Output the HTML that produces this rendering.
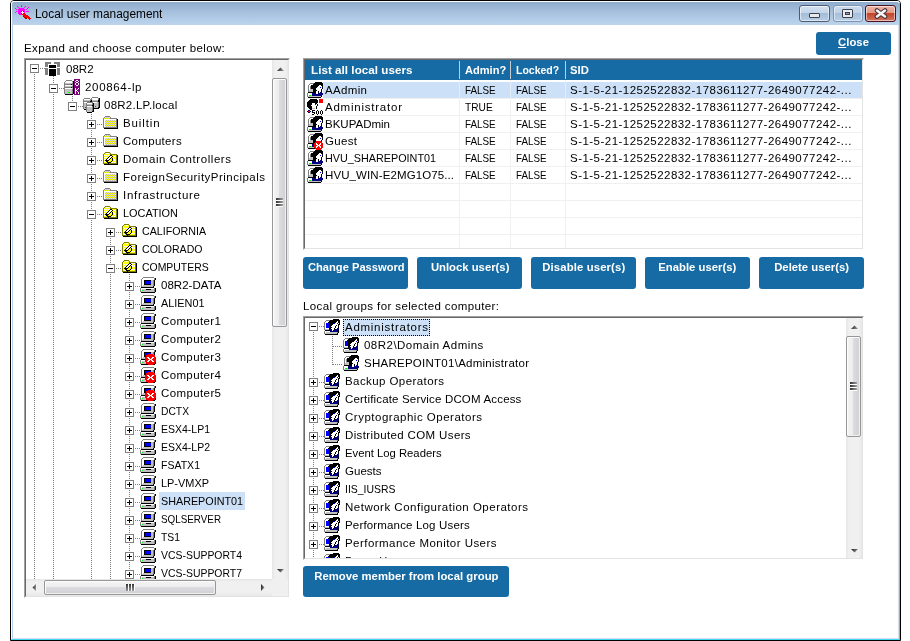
<!DOCTYPE html><html><head><meta charset="utf-8"><title>Local user management</title><style>
*{margin:0;padding:0;box-sizing:border-box}
html{background:#fff}
html,body{width:910px;height:641px;overflow:hidden}
body{position:relative;will-change:transform;font-family:"Liberation Sans",sans-serif;font-size:12px;color:#000}
div,svg{position:absolute}
svg.ic{overflow:visible}
svg.ic path{shape-rendering:crispEdges}
.t{white-space:nowrap;line-height:16px}
.vd{width:1px;background:repeating-linear-gradient(to bottom,#7c7c7c 0 1px,transparent 1px 2px)}
.hd{height:1px;background:repeating-linear-gradient(to right,#7c7c7c 0 1px,transparent 1px 2px)}
.eb{width:9px;height:9px;border:1px solid #808080;background:#fff}
.eb i{position:absolute;background:#000;display:block}
.eb .mh{left:1px;top:3px;width:5px;height:1px}
.eb .mv{left:3px;top:1px;width:1px;height:5px}
.btn{background:#176ba4;border-radius:3px}
.sb{background:#f0f0f0}
.thv{border:1px solid #979797;border-radius:2px;background:linear-gradient(to right,#f5f5f5,#ebebeb 50%,#dcdce0 50%,#d0d0d4);box-shadow:inset 1px 1px 0 #fdfdfd,inset -1px -1px 0 #f0f0f0}
.thh{border:1px solid #979797;border-radius:2px;background:linear-gradient(to bottom,#f5f5f5,#ebebeb 50%,#dcdce0 50%,#d0d0d4);box-shadow:inset 1px 1px 0 #fdfdfd,inset -1px -1px 0 #f0f0f0}
.grip{background:#777}
</style></head><body>
<svg width="0" height="0" style="position:absolute"><defs><linearGradient id="arrg" x1="0" y1="0" x2="1" y2="0.3"><stop offset="0" stop-color="#1a1a1a"/><stop offset="1" stop-color="#8a8a8a"/></linearGradient><symbol id="i-comp" viewBox="0 0 16 16"><path fill="#808080" d="M3 0h11v1h-11zM2 1h1v1h-1zM14 1h1v1h-1zM1 2h1v1h-1zM14 2h1v1h-1zM1 3h1v1h-1zM13 3h1v1h-1zM1 4h1v1h-1zM13 4h1v1h-1zM1 5h1v1h-1zM13 5h1v1h-1zM1 6h1v1h-1zM13 6h1v1h-1zM1 7h1v1h-1zM13 7h1v1h-1zM1 8h1v1h-1zM13 8h1v1h-1zM1 9h1v1h-1zM0 11h1v1h-1zM14 11h1v1h-1zM0 12h1v1h-1zM14 12h1v1h-1zM0 13h1v1h-1zM14 13h1v1h-1zM0 14h1v1h-1zM14 14h1v1h-1z"/><path fill="#ffffff" d="M3 1h11v1h-11zM2 2h12v1h-12zM2 3h2v1h-2zM2 4h2v1h-2zM2 5h2v1h-2zM2 6h2v1h-2zM2 7h2v1h-2zM2 8h1v1h-1zM1 11h13v1h-13zM1 12h1v1h-1zM1 13h1v1h-1z"/><path fill="#000000" d="M15 1h1v1h-1zM15 2h1v1h-1zM4 3h7v1h-7zM14 3h1v1h-1zM4 4h1v1h-1zM14 4h1v1h-1zM4 5h1v1h-1zM14 5h1v1h-1zM4 6h1v1h-1zM14 6h1v1h-1zM4 7h7v1h-7zM14 7h1v1h-1zM14 8h1v1h-1zM13 9h1v1h-1zM1 10h13v1h-13zM15 11h1v1h-1zM6 12h5v1h-5zM15 12h1v1h-1zM15 13h1v1h-1zM15 14h1v1h-1zM1 15h14v1h-14z"/><path fill="#c0c0c0" d="M11 3h2v1h-2zM11 4h2v1h-2zM11 5h2v1h-2zM11 6h2v1h-2zM11 7h2v1h-2zM3 8h10v1h-10zM2 9h11v1h-11zM2 12h4v1h-4zM11 12h3v1h-3zM3 13h11v1h-11zM1 14h13v1h-13z"/><path fill="#0000ff" d="M5 4h6v1h-6zM5 5h6v1h-6zM5 6h6v1h-6z"/><path fill="#00ff00" d="M2 13h1v1h-1z"/></symbol><symbol id="i-compx" viewBox="0 0 16 16"><path fill="#808080" d="M3 0h11v1h-11zM2 1h1v1h-1zM14 1h1v1h-1zM1 2h1v1h-1zM14 2h1v1h-1zM1 3h1v1h-1zM13 3h1v1h-1zM1 4h1v1h-1zM13 4h1v1h-1zM1 5h1v1h-1zM13 5h1v1h-1zM1 6h1v1h-1zM1 7h1v1h-1zM1 8h1v1h-1zM1 9h1v1h-1zM0 11h1v1h-1zM0 12h1v1h-1zM0 13h1v1h-1zM0 14h1v1h-1z"/><path fill="#ffffff" d="M3 1h11v1h-11zM2 2h12v1h-12zM2 3h2v1h-2zM2 4h2v1h-2zM2 5h2v1h-2zM2 6h2v1h-2zM2 7h2v1h-2zM2 8h1v1h-1zM7 8h2v1h-2zM12 8h2v1h-2zM8 9h2v1h-2zM11 9h2v1h-2zM9 10h3v1h-3zM1 11h4v1h-4zM8 11h2v1h-2zM11 11h2v1h-2zM1 12h1v1h-1zM7 12h2v1h-2zM12 12h2v1h-2zM1 13h1v1h-1z"/><path fill="#000000" d="M15 1h1v1h-1zM15 2h1v1h-1zM4 3h7v1h-7zM14 3h1v1h-1zM4 4h1v1h-1zM14 4h1v1h-1zM4 5h1v1h-1zM14 5h1v1h-1zM4 6h1v1h-1zM4 7h2v1h-2zM1 10h4v1h-4zM15 13h1v1h-1zM15 14h1v1h-1zM1 15h7v1h-7zM13 15h2v1h-2z"/><path fill="#c0c0c0" d="M11 3h2v1h-2zM11 4h2v1h-2zM3 8h2v1h-2zM2 9h3v1h-3zM2 12h3v1h-3zM3 13h3v1h-3zM1 14h5v1h-5z"/><path fill="#0000ff" d="M5 4h6v1h-6zM5 5h3v1h-3zM5 6h1v1h-1z"/><path fill="#ff0000" d="M8 5h5v1h-5zM6 6h9v1h-9zM6 7h9v1h-9zM5 8h2v1h-2zM9 8h3v1h-3zM14 8h2v1h-2zM5 9h3v1h-3zM10 9h1v1h-1zM13 9h3v1h-3zM5 10h4v1h-4zM12 10h4v1h-4zM5 11h3v1h-3zM10 11h1v1h-1zM13 11h3v1h-3zM5 12h2v1h-2zM9 12h3v1h-3zM14 12h2v1h-2zM6 13h9v1h-9zM6 14h9v1h-9zM8 15h5v1h-5z"/><path fill="#00ff00" d="M2 13h1v1h-1z"/></symbol><symbol id="i-folder" viewBox="0 0 16 16"><path fill="#808080" d="M3 1h5v1h-5zM2 2h1v1h-1zM8 2h1v1h-1zM1 3h1v1h-1zM8 3h7v1h-7zM1 4h1v1h-1zM14 4h1v1h-1zM1 5h1v1h-1zM14 5h1v1h-1zM1 6h1v1h-1zM14 6h1v1h-1zM1 7h1v1h-1zM14 7h1v1h-1zM1 8h1v1h-1zM14 8h1v1h-1zM1 9h1v1h-1zM14 9h1v1h-1zM1 10h1v1h-1zM14 10h1v1h-1zM1 11h1v1h-1zM14 11h1v1h-1zM1 12h14v1h-14z"/><path fill="#ffff00" d="M3 2h1v1h-1zM5 2h1v1h-1zM7 2h1v1h-1zM2 3h1v1h-1zM4 3h1v1h-1zM6 3h1v1h-1zM3 5h1v1h-1zM5 5h1v1h-1zM7 5h1v1h-1zM9 5h1v1h-1zM11 5h1v1h-1zM13 5h1v1h-1zM4 6h1v1h-1zM6 6h1v1h-1zM8 6h1v1h-1zM10 6h1v1h-1zM12 6h1v1h-1zM3 7h1v1h-1zM5 7h1v1h-1zM7 7h1v1h-1zM9 7h1v1h-1zM11 7h1v1h-1zM13 7h1v1h-1zM4 8h1v1h-1zM6 8h1v1h-1zM8 8h1v1h-1zM10 8h1v1h-1zM12 8h1v1h-1zM3 9h1v1h-1zM5 9h1v1h-1zM7 9h1v1h-1zM9 9h1v1h-1zM11 9h1v1h-1zM13 9h1v1h-1zM4 10h1v1h-1zM6 10h1v1h-1zM8 10h1v1h-1zM10 10h1v1h-1zM12 10h1v1h-1zM3 11h1v1h-1zM5 11h1v1h-1zM7 11h1v1h-1zM9 11h1v1h-1zM11 11h1v1h-1zM13 11h1v1h-1z"/><path fill="#c0c0c0" d="M4 2h1v1h-1zM6 2h1v1h-1zM3 3h1v1h-1zM5 3h1v1h-1zM7 3h1v1h-1zM4 5h1v1h-1zM6 5h1v1h-1zM8 5h1v1h-1zM10 5h1v1h-1zM12 5h1v1h-1zM3 6h1v1h-1zM5 6h1v1h-1zM7 6h1v1h-1zM9 6h1v1h-1zM11 6h1v1h-1zM13 6h1v1h-1zM4 7h1v1h-1zM6 7h1v1h-1zM8 7h1v1h-1zM10 7h1v1h-1zM12 7h1v1h-1zM3 8h1v1h-1zM5 8h1v1h-1zM7 8h1v1h-1zM9 8h1v1h-1zM11 8h1v1h-1zM13 8h1v1h-1zM4 9h1v1h-1zM6 9h1v1h-1zM8 9h1v1h-1zM10 9h1v1h-1zM12 9h1v1h-1zM3 10h1v1h-1zM5 10h1v1h-1zM7 10h1v1h-1zM9 10h1v1h-1zM11 10h1v1h-1zM13 10h1v1h-1zM4 11h1v1h-1zM6 11h1v1h-1zM8 11h1v1h-1zM10 11h1v1h-1zM12 11h1v1h-1z"/><path fill="#ffffff" d="M2 4h12v1h-12zM2 5h1v1h-1zM2 6h1v1h-1zM2 7h1v1h-1zM2 8h1v1h-1zM2 9h1v1h-1zM2 10h1v1h-1zM2 11h1v1h-1z"/><path fill="#000000" d="M15 4h1v1h-1zM15 5h1v1h-1zM15 6h1v1h-1zM15 7h1v1h-1zM15 8h1v1h-1zM15 9h1v1h-1zM15 10h1v1h-1zM15 11h1v1h-1zM15 12h1v1h-1zM2 13h14v1h-14z"/></symbol><symbol id="i-ou" viewBox="0 0 16 16"><path fill="#808000" d="M3 1h5v1h-5zM2 2h1v1h-1zM8 2h1v1h-1zM1 3h1v1h-1zM8 3h7v1h-7zM1 4h1v1h-1zM14 4h1v1h-1zM1 5h1v1h-1zM14 5h1v1h-1zM1 6h1v1h-1zM14 6h1v1h-1zM1 7h1v1h-1zM14 7h1v1h-1zM1 8h1v1h-1zM14 8h1v1h-1zM1 9h1v1h-1zM14 9h1v1h-1zM1 10h1v1h-1zM14 10h1v1h-1zM1 11h1v1h-1zM14 11h1v1h-1zM1 12h5v1h-5zM7 12h8v1h-8z"/><path fill="#ffff00" d="M3 2h1v1h-1zM7 2h1v1h-1zM2 3h6v1h-6zM3 4h1v1h-1zM5 4h1v1h-1zM7 4h1v1h-1zM10 4h1v1h-1zM12 4h1v1h-1zM2 5h1v1h-1zM4 5h1v1h-1zM6 5h1v1h-1zM11 5h1v1h-1zM13 5h1v1h-1zM3 6h1v1h-1zM5 6h1v1h-1zM10 6h1v1h-1zM12 6h1v1h-1zM2 7h1v1h-1zM4 7h1v1h-1zM9 7h1v1h-1zM12 7h1v1h-1zM3 8h1v1h-1zM8 8h2v1h-2zM11 8h1v1h-1zM13 8h1v1h-1zM2 9h1v1h-1zM7 9h3v1h-3zM11 9h1v1h-1zM13 9h1v1h-1zM3 10h1v1h-1zM6 10h3v1h-3zM10 10h1v1h-1zM12 10h1v1h-1zM2 11h1v1h-1zM4 11h1v1h-1zM9 11h1v1h-1zM11 11h1v1h-1zM13 11h1v1h-1z"/><path fill="#ffffff" d="M4 2h3v1h-3zM2 4h1v1h-1zM4 4h1v1h-1zM6 4h1v1h-1zM11 4h1v1h-1zM13 4h1v1h-1zM3 5h1v1h-1zM5 5h1v1h-1zM8 5h2v1h-2zM12 5h1v1h-1zM2 6h1v1h-1zM4 6h1v1h-1zM7 6h2v1h-2zM11 6h1v1h-1zM13 6h1v1h-1zM3 7h1v1h-1zM6 7h2v1h-2zM11 7h1v1h-1zM13 7h1v1h-1zM2 8h1v1h-1zM5 8h2v1h-2zM12 8h1v1h-1zM12 9h1v1h-1zM2 10h1v1h-1zM11 10h1v1h-1zM13 10h1v1h-1zM3 11h1v1h-1zM10 11h1v1h-1zM12 11h1v1h-1z"/><path fill="#000000" d="M8 4h2v1h-2zM15 4h1v1h-1zM7 5h1v1h-1zM10 5h1v1h-1zM15 5h1v1h-1zM6 6h1v1h-1zM9 6h1v1h-1zM15 6h1v1h-1zM5 7h1v1h-1zM8 7h1v1h-1zM10 7h1v1h-1zM15 7h1v1h-1zM4 8h1v1h-1zM7 8h1v1h-1zM10 8h1v1h-1zM15 8h1v1h-1zM3 9h4v1h-4zM10 9h1v1h-1zM15 9h1v1h-1zM4 10h2v1h-2zM9 10h1v1h-1zM15 10h1v1h-1zM5 11h4v1h-4zM15 11h1v1h-1zM6 12h1v1h-1zM15 12h1v1h-1zM2 13h14v1h-14z"/></symbol><symbol id="i-user" viewBox="0 0 16 16"><path fill="#000000" d="M8 0h7v1h-7zM7 1h9v1h-9zM6 2h10v1h-10zM4 3h8v1h-8zM14 3h2v1h-2zM4 4h7v1h-7zM15 4h1v1h-1zM4 5h6v1h-6zM15 5h1v1h-1zM4 6h5v1h-5zM15 6h1v1h-1zM6 7h3v1h-3zM14 7h1v1h-1zM6 8h4v1h-4zM14 8h1v1h-1zM6 9h3v1h-3zM11 9h1v1h-1zM14 9h1v1h-1zM1 10h8v1h-8zM11 10h1v1h-1zM14 14h1v1h-1zM1 15h13v1h-13z"/><path fill="#808080" d="M3 1h4v1h-4zM2 2h1v1h-1zM1 3h1v1h-1zM1 4h1v1h-1zM3 4h1v1h-1zM1 5h1v1h-1zM3 5h1v1h-1zM1 6h1v1h-1zM3 6h1v1h-1zM1 7h1v1h-1zM1 8h1v1h-1zM1 9h1v1h-1zM0 11h1v1h-1zM0 12h1v1h-1zM0 13h1v1h-1zM0 14h1v1h-1z"/><path fill="#ffffff" d="M3 2h3v1h-3zM2 3h2v1h-2zM12 3h2v1h-2zM2 4h1v1h-1zM11 4h4v1h-4zM2 5h1v1h-1zM10 5h3v1h-3zM14 5h1v1h-1zM2 6h1v1h-1zM9 6h6v1h-6zM2 7h1v1h-1zM9 7h5v1h-5zM10 8h4v1h-4zM9 9h2v1h-2zM12 9h2v1h-2zM9 10h2v1h-2zM12 10h1v1h-1zM1 11h4v1h-4zM9 11h2v1h-2zM1 12h4v1h-4zM1 13h1v1h-1z"/><path fill="#0000ff" d="M13 5h1v1h-1z"/><path fill="#c0c0c0" d="M3 7h3v1h-3zM2 8h4v1h-4zM2 9h4v1h-4zM4 13h1v1h-1zM1 14h13v1h-13z"/><path fill="#000080" d="M13 10h2v1h-2zM5 11h4v1h-4zM11 11h5v1h-5zM5 12h11v1h-11zM5 13h10v1h-10z"/><path fill="#00ff00" d="M2 13h2v1h-2z"/></symbol><symbol id="i-userx" viewBox="0 0 16 17"><path fill="#000000" d="M8 0h7v1h-7zM7 1h9v1h-9zM6 2h10v1h-10zM4 3h8v1h-8zM14 3h2v1h-2zM4 4h7v1h-7zM15 4h1v1h-1zM4 5h6v1h-6zM15 5h1v1h-1zM4 6h5v1h-5zM15 6h1v1h-1zM6 7h3v1h-3zM14 7h1v1h-1zM6 8h3v1h-3zM14 8h1v1h-1zM6 9h2v1h-2zM1 10h6v1h-6zM1 15h7v1h-7z"/><path fill="#808080" d="M3 1h4v1h-4zM2 2h1v1h-1zM1 3h1v1h-1zM1 4h1v1h-1zM3 4h1v1h-1zM1 5h1v1h-1zM3 5h1v1h-1zM1 6h1v1h-1zM3 6h1v1h-1zM1 7h1v1h-1zM1 8h1v1h-1zM1 9h1v1h-1zM0 11h1v1h-1zM0 12h1v1h-1zM0 13h1v1h-1zM0 14h1v1h-1z"/><path fill="#ffffff" d="M3 2h3v1h-3zM2 3h2v1h-2zM12 3h2v1h-2zM2 4h1v1h-1zM11 4h4v1h-4zM2 5h1v1h-1zM10 5h3v1h-3zM14 5h1v1h-1zM2 6h1v1h-1zM9 6h6v1h-6zM2 7h1v1h-1zM9 7h5v1h-5zM9 10h1v1h-1zM13 10h1v1h-1zM1 11h4v1h-4zM9 11h2v1h-2zM12 11h2v1h-2zM1 12h4v1h-4zM10 12h3v1h-3zM1 13h1v1h-1zM9 13h2v1h-2zM12 13h2v1h-2zM9 14h1v1h-1zM13 14h1v1h-1z"/><path fill="#0000ff" d="M13 5h1v1h-1z"/><path fill="#c0c0c0" d="M3 7h3v1h-3zM2 8h4v1h-4zM2 9h4v1h-4zM4 13h1v1h-1zM1 14h6v1h-6z"/><path fill="#ff0000" d="M9 8h5v1h-5zM8 9h7v1h-7zM7 10h2v1h-2zM10 10h3v1h-3zM14 10h2v1h-2zM7 11h2v1h-2zM11 11h1v1h-1zM14 11h2v1h-2zM7 12h3v1h-3zM13 12h3v1h-3zM7 13h2v1h-2zM11 13h1v1h-1zM14 13h2v1h-2zM7 14h2v1h-2zM10 14h3v1h-3zM14 14h2v1h-2zM8 15h7v1h-7zM9 16h5v1h-5z"/><path fill="#000080" d="M5 11h2v1h-2zM5 12h2v1h-2zM5 13h2v1h-2z"/><path fill="#00ff00" d="M2 13h2v1h-2z"/></symbol><symbol id="i-admin" viewBox="0 0 18 17"><path fill="#000000" d="M4 1h7v1h-7zM3 2h9v1h-9zM2 3h10v1h-10zM1 4h11v1h-11zM1 5h5v1h-5zM9 5h2v1h-2zM1 6h5v1h-5zM11 6h1v1h-1zM1 7h4v1h-4zM11 7h1v1h-1zM1 8h5v1h-5zM10 8h1v1h-1zM2 9h4v1h-4zM10 9h1v1h-1zM3 10h3v1h-3zM10 10h1v1h-1zM4 11h2v1h-2zM6 12h3v1h-3zM11 12h1v1h-1zM15 12h1v1h-1zM6 13h1v1h-1zM10 13h1v1h-1zM12 13h1v1h-1zM14 13h1v1h-1zM16 13h1v1h-1zM6 14h3v1h-3zM10 14h1v1h-1zM12 14h1v1h-1zM14 14h1v1h-1zM16 14h1v1h-1zM8 15h1v1h-1zM10 15h1v1h-1zM12 15h1v1h-1zM14 15h1v1h-1zM16 15h1v1h-1zM6 16h2v1h-2zM11 16h1v1h-1zM15 16h1v1h-1z"/><path fill="#ff0000" d="M13 1h4v1h-4zM13 2h4v1h-4zM13 3h4v1h-4zM13 4h4v1h-4zM2 13h2v1h-2z"/><path fill="#ffffff" d="M6 5h3v1h-3zM6 6h3v1h-3zM10 6h1v1h-1zM5 7h6v1h-6zM6 8h4v1h-4zM6 9h4v1h-4zM9 10h1v1h-1z"/><path fill="#0000ff" d="M9 6h1v1h-1z"/><path fill="#c0c0c0" d="M6 10h3v1h-3z"/><path fill="#000080" d="M2 12h2v1h-2zM1 13h1v1h-1zM4 13h1v1h-1zM2 14h2v1h-2z"/></symbol><symbol id="i-group" viewBox="0 0 16 16"><path fill="#000000" d="M9 0h6v1h-6zM6 1h10v1h-10zM5 2h8v1h-8zM14 2h2v1h-2zM4 3h8v1h-8zM14 3h2v1h-2zM5 4h5v1h-5zM15 4h1v1h-1zM5 5h4v1h-4zM14 5h2v1h-2zM5 6h3v1h-3zM12 6h1v1h-1zM14 6h1v1h-1zM5 7h2v1h-2zM11 7h1v1h-1zM14 7h1v1h-1zM5 8h3v1h-3zM11 8h1v1h-1zM14 8h1v1h-1zM5 9h2v1h-2zM10 9h1v1h-1zM5 10h1v1h-1zM10 10h1v1h-1zM1 11h5v1h-5zM14 11h1v1h-1zM14 12h1v1h-1zM14 13h1v1h-1zM13 14h1v1h-1zM1 15h13v1h-13z"/><path fill="#808080" d="M2 1h4v1h-4zM1 2h1v1h-1zM0 3h1v1h-1zM0 4h1v1h-1zM0 5h1v1h-1zM0 6h1v1h-1zM0 7h1v1h-1zM0 8h1v1h-1zM0 9h1v1h-1zM0 10h1v1h-1zM0 12h1v1h-1zM0 13h1v1h-1zM13 13h1v1h-1zM0 14h1v1h-1z"/><path fill="#ffffff" d="M2 2h3v1h-3zM13 2h1v1h-1zM1 3h3v1h-3zM12 3h2v1h-2zM1 4h1v1h-1zM11 4h2v1h-2zM14 4h1v1h-1zM1 5h1v1h-1zM9 5h5v1h-5zM1 6h1v1h-1zM8 6h4v1h-4zM13 6h1v1h-1zM1 7h1v1h-1zM7 7h4v1h-4zM12 7h2v1h-2zM1 8h1v1h-1zM8 8h3v1h-3zM12 8h2v1h-2zM1 9h4v1h-4zM7 9h3v1h-3zM11 9h2v1h-2zM8 10h2v1h-2zM8 11h1v1h-1zM1 12h5v1h-5zM1 13h1v1h-1z"/><path fill="#0000ff" d="M2 4h3v1h-3zM10 4h1v1h-1zM13 4h1v1h-1zM2 5h3v1h-3zM2 6h3v1h-3zM2 7h3v1h-3zM2 8h3v1h-3z"/><path fill="#000080" d="M13 9h2v1h-2zM6 10h2v1h-2zM11 10h4v1h-4zM6 11h2v1h-2zM9 11h5v1h-5zM6 12h8v1h-8z"/><path fill="#c0c0c0" d="M1 10h4v1h-4zM2 13h11v1h-11zM1 14h12v1h-12z"/></symbol><symbol id="i-root" viewBox="0 0 15 14"><path fill="#808080" d="M0 0h6v1h-6zM9 0h6v1h-6zM0 1h6v1h-6zM9 1h6v1h-6zM0 2h3v1h-3zM12 2h3v1h-3zM0 3h3v1h-3zM12 3h3v1h-3zM0 4h3v1h-3zM12 4h3v1h-3zM0 6h3v1h-3zM12 6h3v1h-3zM0 7h3v1h-3zM12 7h3v1h-3zM0 8h3v1h-3zM12 8h3v1h-3zM0 9h3v1h-3zM12 9h3v1h-3zM0 10h3v1h-3zM12 10h3v1h-3zM0 11h3v1h-3zM12 11h3v1h-3zM0 12h3v1h-3zM12 12h3v1h-3z"/><path fill="#000000" d="M4 3h7v1h-7zM4 4h7v1h-7zM4 5h7v1h-7zM4 7h7v1h-7zM4 8h7v1h-7zM4 9h7v1h-7zM4 10h7v1h-7zM4 11h7v1h-7zM4 12h7v1h-7zM4 13h7v1h-7z"/></symbol><symbol id="i-server" viewBox="0 0 18 17"><path fill="#800080" d="M11 1h6v1h-6zM11 2h2v1h-2zM15 2h2v1h-2zM11 3h1v1h-1zM13 3h2v1h-2zM16 3h1v1h-1zM11 4h2v1h-2zM15 4h2v1h-2zM11 5h1v1h-1zM13 5h2v1h-2zM16 5h1v1h-1zM11 6h1v1h-1zM13 6h2v1h-2zM16 6h1v1h-1zM11 7h2v1h-2zM15 7h2v1h-2zM11 8h6v1h-6zM11 9h6v1h-6zM11 10h1v1h-1zM13 10h2v1h-2zM16 10h1v1h-1zM11 11h1v1h-1zM13 11h1v1h-1zM15 11h2v1h-2zM11 12h1v1h-1zM14 12h3v1h-3zM11 13h1v1h-1zM13 13h1v1h-1zM15 13h2v1h-2zM11 14h1v1h-1zM13 14h2v1h-2zM16 14h1v1h-1zM11 15h1v1h-1zM13 15h2v1h-2zM16 15h1v1h-1zM11 16h6v1h-6z"/><path fill="#808080" d="M3 2h6v1h-6zM2 3h1v1h-1zM9 3h1v1h-1zM1 4h1v1h-1zM1 5h1v1h-1zM9 5h1v1h-1zM1 6h7v1h-7zM9 6h1v1h-1zM1 7h1v1h-1zM1 8h1v1h-1zM9 8h1v1h-1zM1 9h7v1h-7zM9 9h1v1h-1zM1 10h1v1h-1zM1 11h1v1h-1zM9 11h1v1h-1zM1 12h1v1h-1zM9 12h1v1h-1zM1 13h1v1h-1zM9 13h1v1h-1zM1 14h1v1h-1zM9 14h1v1h-1zM1 15h1v1h-1zM9 15h1v1h-1z"/><path fill="#ffffff" d="M13 2h2v1h-2zM3 3h6v1h-6zM12 3h1v1h-1zM15 3h1v1h-1zM2 4h7v1h-7zM13 4h2v1h-2zM12 5h1v1h-1zM15 5h1v1h-1zM12 6h1v1h-1zM15 6h1v1h-1zM2 7h7v1h-7zM13 7h2v1h-2zM2 10h7v1h-7zM12 10h1v1h-1zM15 10h1v1h-1zM12 11h1v1h-1zM14 11h1v1h-1zM12 12h2v1h-2zM12 13h1v1h-1zM14 13h1v1h-1zM12 14h1v1h-1zM15 14h1v1h-1zM12 15h1v1h-1zM15 15h1v1h-1z"/><path fill="#000000" d="M10 3h1v1h-1zM10 4h1v1h-1zM10 5h1v1h-1zM8 6h1v1h-1zM10 6h1v1h-1zM10 7h1v1h-1zM10 8h1v1h-1zM8 9h1v1h-1zM10 9h1v1h-1zM10 10h1v1h-1zM10 11h1v1h-1zM10 12h1v1h-1zM10 13h1v1h-1zM10 14h1v1h-1zM10 15h1v1h-1zM2 16h8v1h-8z"/><path fill="#c0c0c0" d="M9 4h1v1h-1zM2 5h7v1h-7zM9 7h1v1h-1zM2 8h7v1h-7zM9 10h1v1h-1zM2 11h7v1h-7zM2 12h7v1h-7zM2 13h7v1h-7zM2 14h3v1h-3zM7 14h2v1h-2zM2 15h7v1h-7z"/><path fill="#00ff00" d="M5 14h2v1h-2z"/></symbol><symbol id="i-domain" viewBox="0 0 18 17"><path fill="#808080" d="M10 1h6v1h-6zM2 2h6v1h-6zM9 2h1v1h-1zM16 2h1v1h-1zM1 3h1v1h-1zM8 3h2v1h-2zM16 3h1v1h-1zM1 4h1v1h-1zM8 4h1v1h-1zM1 5h7v1h-7zM10 5h6v1h-6zM1 6h1v1h-1zM5 6h6v1h-6zM16 6h1v1h-1zM1 7h1v1h-1zM4 7h1v1h-1zM10 7h1v1h-1zM16 7h1v1h-1zM1 8h1v1h-1zM4 8h1v1h-1zM10 8h1v1h-1zM16 8h1v1h-1zM1 9h1v1h-1zM4 9h6v1h-6zM16 9h1v1h-1zM1 10h1v1h-1zM4 10h1v1h-1zM10 10h1v1h-1zM16 10h1v1h-1zM1 11h1v1h-1zM4 11h1v1h-1zM10 11h1v1h-1zM1 12h1v1h-1zM4 12h1v1h-1zM10 12h1v1h-1zM4 13h1v1h-1zM10 13h1v1h-1zM4 14h1v1h-1zM10 14h1v1h-1zM4 15h1v1h-1z"/><path fill="#ffffff" d="M10 2h6v1h-6zM2 3h6v1h-6zM10 3h6v1h-6zM2 6h3v1h-3zM11 6h4v1h-4zM5 7h5v1h-5zM5 10h5v1h-5z"/><path fill="#000000" d="M17 2h1v1h-1zM17 3h1v1h-1zM9 4h1v1h-1zM16 4h2v1h-2zM8 5h2v1h-2zM16 5h2v1h-2zM17 6h1v1h-1zM11 7h1v1h-1zM17 7h1v1h-1zM11 8h1v1h-1zM17 8h1v1h-1zM10 9h2v1h-2zM17 9h1v1h-1zM11 10h1v1h-1zM17 10h1v1h-1zM11 11h1v1h-1zM16 11h2v1h-2zM11 12h6v1h-6zM2 13h2v1h-2zM11 13h1v1h-1zM11 14h1v1h-1zM10 15h2v1h-2zM5 16h5v1h-5z"/><path fill="#c0c0c0" d="M2 4h6v1h-6zM10 4h6v1h-6zM15 6h1v1h-1zM2 7h2v1h-2zM12 7h4v1h-4zM2 8h2v1h-2zM5 8h5v1h-5zM12 8h4v1h-4zM2 9h2v1h-2zM12 9h4v1h-4zM2 10h2v1h-2zM12 10h1v1h-1zM14 10h2v1h-2zM2 11h1v1h-1zM5 11h5v1h-5zM12 11h4v1h-4zM2 12h2v1h-2zM5 12h5v1h-5zM5 13h5v1h-5zM5 14h5v1h-5zM5 15h5v1h-5z"/><path fill="#ff0000" d="M13 10h1v1h-1zM3 11h1v1h-1z"/></symbol></defs></svg>
<div style="left:10px;top:0;width:891px;height:641px;border:1px solid #000;border-radius:4px 4px 0 0"></div>
<div style="left:11px;top:1px;width:889px;height:639px;border-left:1px solid #fff;border-top:1px solid #fff;border-radius:3px 3px 0 0"></div>
<div style="left:12px;top:2px;width:887px;height:23px;background:linear-gradient(to bottom,#8fabcc,#a9c3df 50%,#bcd4ee);border-radius:2px 2px 0 0"></div>
<div style="left:12px;top:25px;width:1px;height:613px;background:#b8d0ec"></div>
<div style="left:898px;top:25px;width:1px;height:614px;background:#d8dcef"></div>
<div style="left:899px;top:3px;width:1px;height:637px;background:#40d0f0"></div>
<div style="left:12px;top:638px;width:887px;height:1px;background:#d8dcef"></div>
<div style="left:11px;top:639px;width:889px;height:1px;background:#40d8f0"></div>
<div class="t" style="left:35px;top:6px;transform:scaleX(0.9896);transform-origin:0 0;color:#000">Local user management</div>
<svg class="ic" style="left:14px;top:4px;width:18px;height:17px" viewBox="0 0 18 17"><path fill="#ff00ff" d="M7 1h1v1h-1zM3 2h1v1h-1zM7 2h1v1h-1zM11 2h1v1h-1zM4 3h1v1h-1zM10 3h1v1h-1zM14 3h1v1h-1zM1 4h1v1h-1zM5 4h5v1h-5zM13 4h1v1h-1zM2 5h1v1h-1zM4 5h7v1h-7zM12 5h1v1h-1zM4 6h7v1h-7zM2 7h1v1h-1zM4 7h3v1h-3zM10 7h1v1h-1zM12 7h3v1h-3zM1 8h1v1h-1zM4 8h3v1h-3zM10 8h1v1h-1zM4 9h3v1h-3zM5 10h3v1h-3z"/><path fill="#800080" d="M7 7h1v1h-1zM9 7h1v1h-1zM7 9h1v1h-1z"/><path fill="#ffffff" d="M8 7h1v1h-1zM7 8h3v1h-3zM8 9h1v1h-1z"/><path fill="#ff0000" d="M9 9h2v1h-2zM8 10h4v1h-4zM9 11h5v1h-5zM10 12h5v1h-5zM12 13h4v1h-4zM14 14h3v1h-3zM15 15h1v1h-1z"/><path fill="#a00000" d="M9 12h1v1h-1zM10 13h2v1h-2zM11 14h2v1h-2z"/></svg>
<div style="left:799px;top:5px;width:31px;height:17px;border:1px solid #4d5c74;border-radius:3px;background:linear-gradient(to bottom,#d3e0ef,#c2d4e8 50%,#a3bcd8 50%,#b7cde6);box-shadow:inset 0 0 0 1px rgba(255,255,255,0.55)"></div>
<div style="left:809px;top:13px;width:11px;height:5px;border:1px solid #3a4252;border-radius:1px;background:#e9e9e9"></div>
<div style="left:833px;top:5px;width:30px;height:17px;border:1px solid #7d95b2;border-radius:3px;background:linear-gradient(to bottom,#ccdbec,#bfd1e6 50%,#a7bfda 50%,#b8cee6);box-shadow:inset 0 0 0 1px rgba(255,255,255,0.55)"></div>
<div style="left:842px;top:9px;width:11px;height:9px;border:1px solid #3a4252;border-radius:1px;background:#ececec"></div>
<div style="left:845px;top:12px;width:5px;height:3px;border:1px solid #3a4252;background:#8aa4c4"></div>
<div style="left:865px;top:5px;width:31px;height:17px;border:1px solid #4a1222;border-radius:3px;background:linear-gradient(to bottom,#eeb3a5,#e39784 50%,#c4452a 50%,#d2745c);box-shadow:inset 0 0 0 1px rgba(255,255,255,0.55)"></div>
<svg style="left:874px;top:8px;width:14px;height:11px" viewBox="0 0 14 11"><path d="M3 2.5L11 8.5M11 2.5L3 8.5" stroke="#40303c" stroke-width="4.6" stroke-linecap="round"/><path d="M3 2.5L11 8.5M11 2.5L3 8.5" stroke="#f6f6f6" stroke-width="2.6" stroke-linecap="round"/></svg>
<div class="t" style="left:24px;top:40px;letter-spacing:0.361px;font-size:11.5px">Expand and choose computer below:</div>
<div class="t" style="left:303px;top:298px;letter-spacing:0.388px;font-size:11.5px">Local groups for selected computer:</div>
<div class="btn" style="left:816px;top:32px;width:75px;height:23px"></div>
<div class="t" style="left:838px;top:34px;letter-spacing:0.034px;font-size:11.3px;font-weight:bold;color:#fff;text-decoration-thickness:1px;text-underline-offset:1px"><u>C</u>lose</div>
<div style="left:24px;top:58px;width:266px;height:540px;border-top:1px solid #a0a0a0;border-left:1px solid #a0a0a0;border-right:1px solid #fff;border-bottom:1px solid #fff"></div>
<div style="left:25px;top:59px;width:264px;height:538px;border-top:1px solid #696969;border-left:1px solid #696969;border-right:1px solid #e3e3e3;border-bottom:1px solid #e3e3e3;overflow:hidden">
<div class="vd" style="left:8px;top:14px;height:526px"></div>
<div class="vd" style="left:27px;top:16px;height:524px"></div>
<div class="vd" style="left:46px;top:34px;height:8px"></div>
<div class="vd" style="left:65px;top:52px;height:488px"></div>
<div class="vd" style="left:84px;top:178px;height:362px"></div>
<div class="vd" style="left:103px;top:214px;height:326px"></div>
<div class="hd" style="left:14px;top:8px;width:5px"></div>
<div class="eb" style="left:4px;top:4px"><i class="mh"></i></div>
<svg class="ic" style="left:19px;top:2px;width:15px;height:14px"><use href="#i-root"/></svg>
<div class="t" style="left:40px;top:1px;letter-spacing:0.036px;font-size:11.5px">08R2</div>
<div class="hd" style="left:33px;top:28px;width:5px"></div>
<div class="eb" style="left:23px;top:24px"><i class="mh"></i></div>
<svg class="ic" style="left:37px;top:18px;width:18px;height:17px"><use href="#i-server"/></svg>
<div class="t" style="left:59px;top:19px;letter-spacing:0.668px;font-size:11.5px">200864-lp</div>
<div class="hd" style="left:52px;top:46px;width:5px"></div>
<div class="eb" style="left:42px;top:42px"><i class="mh"></i></div>
<svg class="ic" style="left:56px;top:36px;width:18px;height:17px"><use href="#i-domain"/></svg>
<div class="t" style="left:78px;top:37px;letter-spacing:0.257px;font-size:11.5px">08R2.LP.local</div>
<div class="hd" style="left:71px;top:64px;width:5px"></div>
<div class="eb" style="left:61px;top:60px"><i class="mh"></i><i class="mv"></i></div>
<svg class="ic" style="left:76px;top:55px;width:16px;height:16px"><use href="#i-folder"/></svg>
<div class="t" style="left:97px;top:55px;letter-spacing:0.896px;font-size:11.5px">Builtin</div>
<div class="hd" style="left:71px;top:82px;width:5px"></div>
<div class="eb" style="left:61px;top:78px"><i class="mh"></i><i class="mv"></i></div>
<svg class="ic" style="left:76px;top:73px;width:16px;height:16px"><use href="#i-folder"/></svg>
<div class="t" style="left:97px;top:73px;letter-spacing:0.307px;font-size:11.5px">Computers</div>
<div class="hd" style="left:71px;top:100px;width:5px"></div>
<div class="eb" style="left:61px;top:96px"><i class="mh"></i><i class="mv"></i></div>
<svg class="ic" style="left:76px;top:91px;width:16px;height:16px"><use href="#i-ou"/></svg>
<div class="t" style="left:97px;top:91px;letter-spacing:0.563px;font-size:11.5px">Domain Controllers</div>
<div class="hd" style="left:71px;top:118px;width:5px"></div>
<div class="eb" style="left:61px;top:114px"><i class="mh"></i><i class="mv"></i></div>
<svg class="ic" style="left:76px;top:109px;width:16px;height:16px"><use href="#i-folder"/></svg>
<div class="t" style="left:97px;top:109px;letter-spacing:0.484px;font-size:11.5px">ForeignSecurityPrincipals</div>
<div class="hd" style="left:71px;top:136px;width:5px"></div>
<div class="eb" style="left:61px;top:132px"><i class="mh"></i><i class="mv"></i></div>
<svg class="ic" style="left:76px;top:127px;width:16px;height:16px"><use href="#i-folder"/></svg>
<div class="t" style="left:97px;top:127px;letter-spacing:0.712px;font-size:11.5px">Infrastructure</div>
<div class="hd" style="left:71px;top:154px;width:5px"></div>
<div class="eb" style="left:61px;top:150px"><i class="mh"></i></div>
<svg class="ic" style="left:76px;top:145px;width:16px;height:16px"><use href="#i-ou"/></svg>
<div class="t" style="left:97px;top:145px;transform:scaleX(0.9494);transform-origin:0 0;font-size:11.5px">LOCATION</div>
<div class="hd" style="left:90px;top:172px;width:5px"></div>
<div class="eb" style="left:80px;top:168px"><i class="mh"></i><i class="mv"></i></div>
<svg class="ic" style="left:95px;top:163px;width:16px;height:16px"><use href="#i-ou"/></svg>
<div class="t" style="left:116px;top:163px;transform:scaleX(0.9274);transform-origin:0 0;font-size:11.5px">CALIFORNIA</div>
<div class="hd" style="left:90px;top:190px;width:5px"></div>
<div class="eb" style="left:80px;top:186px"><i class="mh"></i><i class="mv"></i></div>
<svg class="ic" style="left:95px;top:181px;width:16px;height:16px"><use href="#i-ou"/></svg>
<div class="t" style="left:116px;top:181px;transform:scaleX(0.9192);transform-origin:0 0;font-size:11.5px">COLORADO</div>
<div class="hd" style="left:90px;top:208px;width:5px"></div>
<div class="eb" style="left:80px;top:204px"><i class="mh"></i></div>
<svg class="ic" style="left:95px;top:199px;width:16px;height:16px"><use href="#i-ou"/></svg>
<div class="t" style="left:116px;top:199px;transform:scaleX(0.9078);transform-origin:0 0;font-size:11.5px">COMPUTERS</div>
<div class="hd" style="left:109px;top:226px;width:5px"></div>
<div class="eb" style="left:99px;top:222px"><i class="mh"></i><i class="mv"></i></div>
<svg class="ic" style="left:114px;top:217px;width:16px;height:16px"><use href="#i-comp"/></svg>
<div class="t" style="left:135px;top:217px;letter-spacing:0.027px;font-size:11.5px">08R2-DATA</div>
<div class="hd" style="left:109px;top:244px;width:5px"></div>
<div class="eb" style="left:99px;top:240px"><i class="mh"></i><i class="mv"></i></div>
<svg class="ic" style="left:114px;top:235px;width:16px;height:16px"><use href="#i-comp"/></svg>
<div class="t" style="left:135px;top:235px;transform:scaleX(0.9451);transform-origin:0 0;font-size:11.5px">ALIEN01</div>
<div class="hd" style="left:109px;top:262px;width:5px"></div>
<div class="eb" style="left:99px;top:258px"><i class="mh"></i><i class="mv"></i></div>
<svg class="ic" style="left:114px;top:253px;width:16px;height:16px"><use href="#i-comp"/></svg>
<div class="t" style="left:135px;top:253px;letter-spacing:0.364px;font-size:11.5px">Computer1</div>
<div class="hd" style="left:109px;top:280px;width:5px"></div>
<div class="eb" style="left:99px;top:276px"><i class="mh"></i><i class="mv"></i></div>
<svg class="ic" style="left:114px;top:271px;width:16px;height:16px"><use href="#i-comp"/></svg>
<div class="t" style="left:135px;top:271px;letter-spacing:0.364px;font-size:11.5px">Computer2</div>
<div class="hd" style="left:109px;top:298px;width:5px"></div>
<div class="eb" style="left:99px;top:294px"><i class="mh"></i><i class="mv"></i></div>
<svg class="ic" style="left:114px;top:289px;width:16px;height:16px"><use href="#i-compx"/></svg>
<div class="t" style="left:135px;top:289px;letter-spacing:0.364px;font-size:11.5px">Computer3</div>
<div class="hd" style="left:109px;top:316px;width:5px"></div>
<div class="eb" style="left:99px;top:312px"><i class="mh"></i><i class="mv"></i></div>
<svg class="ic" style="left:114px;top:307px;width:16px;height:16px"><use href="#i-compx"/></svg>
<div class="t" style="left:135px;top:307px;letter-spacing:0.364px;font-size:11.5px">Computer4</div>
<div class="hd" style="left:109px;top:334px;width:5px"></div>
<div class="eb" style="left:99px;top:330px"><i class="mh"></i><i class="mv"></i></div>
<svg class="ic" style="left:114px;top:325px;width:16px;height:16px"><use href="#i-compx"/></svg>
<div class="t" style="left:135px;top:325px;letter-spacing:0.389px;font-size:11.5px">Computer5</div>
<div class="hd" style="left:109px;top:352px;width:5px"></div>
<div class="eb" style="left:99px;top:348px"><i class="mh"></i><i class="mv"></i></div>
<svg class="ic" style="left:114px;top:343px;width:16px;height:16px"><use href="#i-comp"/></svg>
<div class="t" style="left:135px;top:343px;transform:scaleX(0.8944);transform-origin:0 0;font-size:11.5px">DCTX</div>
<div class="hd" style="left:109px;top:370px;width:5px"></div>
<div class="eb" style="left:99px;top:366px"><i class="mh"></i><i class="mv"></i></div>
<svg class="ic" style="left:114px;top:361px;width:16px;height:16px"><use href="#i-comp"/></svg>
<div class="t" style="left:135px;top:361px;transform:scaleX(0.9125);transform-origin:0 0;font-size:11.5px">ESX4-LP1</div>
<div class="hd" style="left:109px;top:388px;width:5px"></div>
<div class="eb" style="left:99px;top:384px"><i class="mh"></i><i class="mv"></i></div>
<svg class="ic" style="left:114px;top:379px;width:16px;height:16px"><use href="#i-comp"/></svg>
<div class="t" style="left:135px;top:379px;transform:scaleX(0.9125);transform-origin:0 0;font-size:11.5px">ESX4-LP2</div>
<div class="hd" style="left:109px;top:406px;width:5px"></div>
<div class="eb" style="left:99px;top:402px"><i class="mh"></i><i class="mv"></i></div>
<svg class="ic" style="left:114px;top:397px;width:16px;height:16px"><use href="#i-comp"/></svg>
<div class="t" style="left:135px;top:397px;transform:scaleX(0.9154);transform-origin:0 0;font-size:11.5px">FSATX1</div>
<div class="hd" style="left:109px;top:424px;width:5px"></div>
<div class="eb" style="left:99px;top:420px"><i class="mh"></i><i class="mv"></i></div>
<svg class="ic" style="left:114px;top:415px;width:16px;height:16px"><use href="#i-comp"/></svg>
<div class="t" style="left:135px;top:415px;transform:scaleX(0.9507);transform-origin:0 0;font-size:11.5px">LP-VMXP</div>
<div class="hd" style="left:109px;top:442px;width:5px"></div>
<div class="eb" style="left:99px;top:438px"><i class="mh"></i><i class="mv"></i></div>
<svg class="ic" style="left:114px;top:433px;width:16px;height:16px"><use href="#i-comp"/></svg>
<div style="left:133px;top:432px;width:86px;height:18px;background:#cce1f7"></div>
<div class="t" style="left:135px;top:433px;transform:scaleX(0.9366);transform-origin:0 0;font-size:11.5px">SHAREPOINT01</div>
<div class="hd" style="left:109px;top:460px;width:5px"></div>
<div class="eb" style="left:99px;top:456px"><i class="mh"></i><i class="mv"></i></div>
<svg class="ic" style="left:114px;top:451px;width:16px;height:16px"><use href="#i-comp"/></svg>
<div class="t" style="left:135px;top:451px;transform:scaleX(0.8560);transform-origin:0 0;font-size:11.5px">SQLSERVER</div>
<div class="hd" style="left:109px;top:478px;width:5px"></div>
<div class="eb" style="left:99px;top:474px"><i class="mh"></i><i class="mv"></i></div>
<svg class="ic" style="left:114px;top:469px;width:16px;height:16px"><use href="#i-comp"/></svg>
<div class="t" style="left:135px;top:469px;transform:scaleX(0.9009);transform-origin:0 0;font-size:11.5px">TS1</div>
<div class="hd" style="left:109px;top:496px;width:5px"></div>
<div class="eb" style="left:99px;top:492px"><i class="mh"></i><i class="mv"></i></div>
<svg class="ic" style="left:114px;top:487px;width:16px;height:16px"><use href="#i-comp"/></svg>
<div class="t" style="left:135px;top:487px;transform:scaleX(0.9075);transform-origin:0 0;font-size:11.5px">VCS-SUPPORT4</div>
<div class="hd" style="left:109px;top:514px;width:5px"></div>
<div class="eb" style="left:99px;top:510px"><i class="mh"></i><i class="mv"></i></div>
<svg class="ic" style="left:114px;top:505px;width:16px;height:16px"><use href="#i-comp"/></svg>
<div class="t" style="left:135px;top:505px;transform:scaleX(0.9075);transform-origin:0 0;font-size:11.5px">VCS-SUPPORT7</div>
<div class="hd" style="left:109px;top:532px;width:5px"></div>
<div class="eb" style="left:99px;top:528px"><i class="mh"></i><i class="mv"></i></div>
<svg class="ic" style="left:114px;top:523px;width:16px;height:16px"><use href="#i-comp"/></svg>
<div class="t" style="left:135px;top:523px;transform:scaleX(0.9075);transform-origin:0 0;font-size:11.5px">VCS-SUPPORT8</div>
<div class="sb" style="left:246px;top:0;width:16px;height:519px;background:linear-gradient(to right,#e6e6e6,#f0f0f0 3px,#f0f0f0 13px,#e8e8e8)"></div>
<svg style="left:251px;top:7px;width:7px;height:4px" viewBox="0 0 7 4"><path d="M0 4L3.5 0.5L7 4Z" fill="url(#arrg)"/></svg>
<svg style="left:251px;top:509px;width:7px;height:4px" viewBox="0 0 7 4"><path d="M0 0L7 0L3.5 3.5Z" fill="url(#arrg)"/></svg>
<div class="thv" style="left:246px;top:18px;width:15px;height:249px"></div>
<div class="grip" style="left:250px;top:138px;width:7px;height:2px;background:linear-gradient(to right,#303030,#a0a0a0);box-shadow:0 1px 0 #fff"></div>
<div class="grip" style="left:250px;top:141px;width:7px;height:2px;background:linear-gradient(to right,#303030,#a0a0a0);box-shadow:0 1px 0 #fff"></div>
<div class="grip" style="left:250px;top:144px;width:7px;height:2px;background:linear-gradient(to right,#303030,#a0a0a0);box-shadow:0 1px 0 #fff"></div>
<div class="sb" style="left:0;top:519px;width:246px;height:17px;background:linear-gradient(to bottom,#e6e6e6,#f0f0f0 3px,#f0f0f0 13px,#e8e8e8)"></div>
<div class="sb" style="left:246px;top:519px;width:16px;height:17px"></div>
<svg style="left:6px;top:524px;width:4px;height:7px" viewBox="0 0 4 7"><path d="M4 0L4 7L0.5 3.5Z" fill="url(#arrg)"/></svg>
<svg style="left:235px;top:524px;width:4px;height:7px" viewBox="0 0 4 7"><path d="M0 0L0 7L3.5 3.5Z" fill="url(#arrg)"/></svg>
<div class="thh" style="left:18px;top:520px;width:172px;height:15px"></div>
<div class="grip" style="left:100px;top:524px;width:2px;height:7px;background:linear-gradient(to bottom,#303030,#9a9a9a);box-shadow:1px 0 0 #fff"></div>
<div class="grip" style="left:103px;top:524px;width:2px;height:7px;background:linear-gradient(to bottom,#303030,#9a9a9a);box-shadow:1px 0 0 #fff"></div>
<div class="grip" style="left:106px;top:524px;width:2px;height:7px;background:linear-gradient(to bottom,#303030,#9a9a9a);box-shadow:1px 0 0 #fff"></div>
</div>
<div style="left:303px;top:58px;width:561px;height:192px;border-top:1px solid #a0a0a0;border-left:1px solid #a0a0a0;border-right:1px solid #fff;border-bottom:1px solid #fff"></div>
<div style="left:304px;top:59px;width:559px;height:190px;border-top:1px solid #696969;border-left:1px solid #696969;border-right:1px solid #e3e3e3;border-bottom:1px solid #e3e3e3;overflow:hidden">
<div style="left:0;top:0;width:557px;height:20px;background:#176ba4"></div>
<div style="left:154px;top:1px;width:1px;height:18px;background:#c8ccd0"></div>
<div style="left:205px;top:1px;width:1px;height:18px;background:#c8ccd0"></div>
<div style="left:260px;top:1px;width:1px;height:18px;background:#c8ccd0"></div>
<div class="t" style="left:6px;top:2px;letter-spacing:0.046px;font-size:11.6px;font-weight:bold;color:#fff">List all local users</div>
<div class="t" style="left:160px;top:2px;transform:scaleX(0.9548);transform-origin:0 0;font-size:11.6px;font-weight:bold;color:#fff">Admin?</div>
<div class="t" style="left:211px;top:2px;transform:scaleX(0.9062);transform-origin:0 0;font-size:11.6px;font-weight:bold;color:#fff">Locked?</div>
<div class="t" style="left:265px;top:2px;transform:scaleX(0.9727);transform-origin:0 0;font-size:11.6px;font-weight:bold;color:#fff">SID</div>
<div style="left:0;top:38px;width:557px;height:1px;background:#f0f0f0"></div>
<div style="left:0;top:55px;width:557px;height:1px;background:#f0f0f0"></div>
<div style="left:0;top:72px;width:557px;height:1px;background:#f0f0f0"></div>
<div style="left:0;top:89px;width:557px;height:1px;background:#f0f0f0"></div>
<div style="left:0;top:106px;width:557px;height:1px;background:#f0f0f0"></div>
<div style="left:0;top:123px;width:557px;height:1px;background:#f0f0f0"></div>
<div style="left:0;top:140px;width:557px;height:1px;background:#f0f0f0"></div>
<div style="left:0;top:157px;width:557px;height:1px;background:#f0f0f0"></div>
<div style="left:0;top:174px;width:557px;height:1px;background:#f0f0f0"></div>
<div style="left:0;top:191px;width:557px;height:1px;background:#f0f0f0"></div>
<div style="left:154px;top:20px;width:1px;height:170px;background:#f0f0f0"></div>
<div style="left:205px;top:20px;width:1px;height:170px;background:#f0f0f0"></div>
<div style="left:260px;top:20px;width:1px;height:170px;background:#f0f0f0"></div>
<div style="left:18px;top:22px;width:539px;height:16px;background:#cce1f7"></div>
<div style="left:154px;top:22px;width:1px;height:16px;background:#e4edf7"></div>
<div style="left:205px;top:22px;width:1px;height:16px;background:#e4edf7"></div>
<div style="left:260px;top:22px;width:1px;height:16px;background:#e4edf7"></div>
<svg class="ic" style="left:2px;top:22px;width:16px;height:16px"><use href="#i-user"/></svg>
<div class="t" style="left:20px;top:22px;letter-spacing:0.347px;font-size:11.5px">AAdmin</div>
<div class="t" style="left:160px;top:22px;transform:scaleX(0.8576);transform-origin:0 0;font-size:11.5px">FALSE</div>
<div class="t" style="left:211px;top:22px;transform:scaleX(0.8520);transform-origin:0 0;font-size:11.5px">FALSE</div>
<div class="t" style="left:265px;top:22px;letter-spacing:0.471px;font-size:11.5px">S-1-5-21-1252522832-1783611277-2649077242-...</div>
<svg class="ic" style="left:1px;top:38px;width:18px;height:17px"><use href="#i-admin"/></svg>
<div class="t" style="left:20px;top:39px;letter-spacing:0.771px;font-size:11.5px">Administrator</div>
<div class="t" style="left:160px;top:39px;transform:scaleX(0.8848);transform-origin:0 0;font-size:11.5px">TRUE</div>
<div class="t" style="left:211px;top:39px;transform:scaleX(0.8520);transform-origin:0 0;font-size:11.5px">FALSE</div>
<div class="t" style="left:265px;top:39px;letter-spacing:0.471px;font-size:11.5px">S-1-5-21-1252522832-1783611277-2649077242-...</div>
<svg class="ic" style="left:2px;top:56px;width:16px;height:16px"><use href="#i-user"/></svg>
<div class="t" style="left:20px;top:56px;letter-spacing:0.004px;font-size:11.5px">BKUPADmin</div>
<div class="t" style="left:160px;top:56px;transform:scaleX(0.8576);transform-origin:0 0;font-size:11.5px">FALSE</div>
<div class="t" style="left:211px;top:56px;transform:scaleX(0.8520);transform-origin:0 0;font-size:11.5px">FALSE</div>
<div class="t" style="left:265px;top:56px;letter-spacing:0.471px;font-size:11.5px">S-1-5-21-1252522832-1783611277-2649077242-...</div>
<svg class="ic" style="left:2px;top:73px;width:16px;height:17px"><use href="#i-userx"/></svg>
<div class="t" style="left:20px;top:73px;letter-spacing:0.330px;font-size:11.5px">Guest</div>
<div class="t" style="left:160px;top:73px;transform:scaleX(0.8576);transform-origin:0 0;font-size:11.5px">FALSE</div>
<div class="t" style="left:211px;top:73px;transform:scaleX(0.8520);transform-origin:0 0;font-size:11.5px">FALSE</div>
<div class="t" style="left:265px;top:73px;letter-spacing:0.471px;font-size:11.5px">S-1-5-21-1252522832-1783611277-2649077242-...</div>
<svg class="ic" style="left:2px;top:90px;width:16px;height:16px"><use href="#i-user"/></svg>
<div class="t" style="left:20px;top:90px;transform:scaleX(0.9389);transform-origin:0 0;font-size:11.5px">HVU_SHAREPOINT01</div>
<div class="t" style="left:160px;top:90px;transform:scaleX(0.8576);transform-origin:0 0;font-size:11.5px">FALSE</div>
<div class="t" style="left:211px;top:90px;transform:scaleX(0.8520);transform-origin:0 0;font-size:11.5px">FALSE</div>
<div class="t" style="left:265px;top:90px;letter-spacing:0.471px;font-size:11.5px">S-1-5-21-1252522832-1783611277-2649077242-...</div>
<svg class="ic" style="left:2px;top:107px;width:16px;height:16px"><use href="#i-user"/></svg>
<div class="t" style="left:20px;top:107px;letter-spacing:0.102px;font-size:11.5px">HVU_WIN-E2MG1O75...</div>
<div class="t" style="left:160px;top:107px;transform:scaleX(0.8576);transform-origin:0 0;font-size:11.5px">FALSE</div>
<div class="t" style="left:211px;top:107px;transform:scaleX(0.8520);transform-origin:0 0;font-size:11.5px">FALSE</div>
<div class="t" style="left:265px;top:107px;letter-spacing:0.471px;font-size:11.5px">S-1-5-21-1252522832-1783611277-2649077242-...</div>
</div>
<div class="btn" style="left:303px;top:257px;width:105px;height:32px"></div>
<div class="t" style="left:307.8px;top:259px;transform:scaleX(0.9864);transform-origin:0 0;font-size:11.3px;font-weight:bold;color:#fff">Change Password</div>
<div class="btn" style="left:417px;top:257px;width:105px;height:32px"></div>
<div class="t" style="left:430.9px;top:259px;letter-spacing:0.002px;font-size:11.3px;font-weight:bold;color:#fff">Unlock user(s)</div>
<div class="btn" style="left:531px;top:257px;width:105px;height:32px"></div>
<div class="t" style="left:542.3px;top:259px;letter-spacing:0.136px;font-size:11.3px;font-weight:bold;color:#fff">Disable user(s)</div>
<div class="btn" style="left:645px;top:257px;width:105px;height:32px"></div>
<div class="t" style="left:658.3px;top:259px;letter-spacing:0.012px;font-size:11.3px;font-weight:bold;color:#fff">Enable user(s)</div>
<div class="btn" style="left:759px;top:257px;width:105px;height:32px"></div>
<div class="t" style="left:774.2px;top:259px;letter-spacing:0.007px;font-size:11.3px;font-weight:bold;color:#fff">Delete user(s)</div>
<div class="btn" style="left:303px;top:566px;width:206px;height:31px"></div>
<div class="t" style="left:314.2px;top:568px;letter-spacing:0.034px;font-size:11.3px;font-weight:bold;color:#fff">Remove member from local group</div>
<div style="left:303px;top:316px;width:561px;height:244px;border-top:1px solid #a0a0a0;border-left:1px solid #a0a0a0;border-right:1px solid #fff;border-bottom:1px solid #fff"></div>
<div style="left:304px;top:317px;width:559px;height:242px;border-top:1px solid #696969;border-left:1px solid #696969;border-right:1px solid #e3e3e3;border-bottom:1px solid #e3e3e3;overflow:hidden">
<div class="vd" style="left:8px;top:14px;height:268px"></div>
<div class="vd" style="left:27px;top:18px;height:29px"></div>
<div class="hd" style="left:14px;top:8px;width:5px"></div>
<div class="eb" style="left:4px;top:4px"><i class="mh"></i></div>
<svg class="ic" style="left:19px;top:1px;width:16px;height:16px"><use href="#i-group"/></svg>
<div style="left:38px;top:1px;width:87px;height:17px;background:#cce1f7;outline:1px dotted #000;outline-offset:-1px"></div>
<div class="t" style="left:40px;top:1px;letter-spacing:0.731px;font-size:11.5px">Administrators</div>
<div class="hd" style="left:28px;top:28px;width:10px"></div>
<svg class="ic" style="left:38px;top:19px;width:16px;height:16px"><use href="#i-group"/></svg>
<div class="t" style="left:59px;top:19px;letter-spacing:0.479px;font-size:11.5px">08R2\Domain Admins</div>
<div class="hd" style="left:28px;top:46px;width:10px"></div>
<svg class="ic" style="left:38px;top:37px;width:16px;height:16px"><use href="#i-user"/></svg>
<div class="t" style="left:59px;top:37px;letter-spacing:0.260px;font-size:11.5px">SHAREPOINT01\Administrator</div>
<div class="hd" style="left:14px;top:64px;width:5px"></div>
<div class="eb" style="left:4px;top:60px"><i class="mh"></i><i class="mv"></i></div>
<svg class="ic" style="left:19px;top:55px;width:16px;height:16px"><use href="#i-group"/></svg>
<div class="t" style="left:40px;top:55px;letter-spacing:0.421px;font-size:11.5px">Backup Operators</div>
<div class="hd" style="left:14px;top:82px;width:5px"></div>
<div class="eb" style="left:4px;top:78px"><i class="mh"></i><i class="mv"></i></div>
<svg class="ic" style="left:19px;top:73px;width:16px;height:16px"><use href="#i-group"/></svg>
<div class="t" style="left:40px;top:73px;letter-spacing:0.170px;font-size:11.5px">Certificate Service DCOM Access</div>
<div class="hd" style="left:14px;top:100px;width:5px"></div>
<div class="eb" style="left:4px;top:96px"><i class="mh"></i><i class="mv"></i></div>
<svg class="ic" style="left:19px;top:91px;width:16px;height:16px"><use href="#i-group"/></svg>
<div class="t" style="left:40px;top:91px;letter-spacing:0.504px;font-size:11.5px">Cryptographic Operators</div>
<div class="hd" style="left:14px;top:118px;width:5px"></div>
<div class="eb" style="left:4px;top:114px"><i class="mh"></i><i class="mv"></i></div>
<svg class="ic" style="left:19px;top:109px;width:16px;height:16px"><use href="#i-group"/></svg>
<div class="t" style="left:40px;top:109px;letter-spacing:0.369px;font-size:11.5px">Distributed COM Users</div>
<div class="hd" style="left:14px;top:136px;width:5px"></div>
<div class="eb" style="left:4px;top:132px"><i class="mh"></i><i class="mv"></i></div>
<svg class="ic" style="left:19px;top:127px;width:16px;height:16px"><use href="#i-group"/></svg>
<div class="t" style="left:40px;top:127px;transform:scaleX(0.9812);transform-origin:0 0;font-size:11.5px">Event Log Readers</div>
<div class="hd" style="left:14px;top:154px;width:5px"></div>
<div class="eb" style="left:4px;top:150px"><i class="mh"></i><i class="mv"></i></div>
<svg class="ic" style="left:19px;top:145px;width:16px;height:16px"><use href="#i-group"/></svg>
<div class="t" style="left:40px;top:145px;letter-spacing:0.034px;font-size:11.5px">Guests</div>
<div class="hd" style="left:14px;top:172px;width:5px"></div>
<div class="eb" style="left:4px;top:168px"><i class="mh"></i><i class="mv"></i></div>
<svg class="ic" style="left:19px;top:163px;width:16px;height:16px"><use href="#i-group"/></svg>
<div class="t" style="left:40px;top:163px;transform:scaleX(0.9082);transform-origin:0 0;font-size:11.5px">IIS_IUSRS</div>
<div class="hd" style="left:14px;top:190px;width:5px"></div>
<div class="eb" style="left:4px;top:186px"><i class="mh"></i><i class="mv"></i></div>
<svg class="ic" style="left:19px;top:181px;width:16px;height:16px"><use href="#i-group"/></svg>
<div class="t" style="left:40px;top:181px;letter-spacing:0.497px;font-size:11.5px">Network Configuration Operators</div>
<div class="hd" style="left:14px;top:208px;width:5px"></div>
<div class="eb" style="left:4px;top:204px"><i class="mh"></i><i class="mv"></i></div>
<svg class="ic" style="left:19px;top:199px;width:16px;height:16px"><use href="#i-group"/></svg>
<div class="t" style="left:40px;top:199px;letter-spacing:0.163px;font-size:11.5px">Performance Log Users</div>
<div class="hd" style="left:14px;top:226px;width:5px"></div>
<div class="eb" style="left:4px;top:222px"><i class="mh"></i><i class="mv"></i></div>
<svg class="ic" style="left:19px;top:217px;width:16px;height:16px"><use href="#i-group"/></svg>
<div class="t" style="left:40px;top:217px;letter-spacing:0.454px;font-size:11.5px">Performance Monitor Users</div>
<div class="hd" style="left:14px;top:244px;width:5px"></div>
<div class="eb" style="left:4px;top:240px"><i class="mh"></i><i class="mv"></i></div>
<svg class="ic" style="left:19px;top:235px;width:16px;height:16px"><use href="#i-group"/></svg>
<div class="t" style="left:40px;top:235px;transform:scaleX(0.9571);transform-origin:0 0;font-size:11.5px">Power Users</div>
<div class="sb" style="left:541px;top:0;width:16px;height:240px;background:linear-gradient(to right,#e6e6e6,#f0f0f0 3px,#f0f0f0 13px,#e8e8e8)"></div>
<svg style="left:546px;top:7px;width:7px;height:4px" viewBox="0 0 7 4"><path d="M0 4L3.5 0.5L7 4Z" fill="url(#arrg)"/></svg>
<svg style="left:546px;top:231px;width:7px;height:4px" viewBox="0 0 7 4"><path d="M0 0L7 0L3.5 3.5Z" fill="url(#arrg)"/></svg>
<div class="thv" style="left:541px;top:18px;width:15px;height:101px"></div>
<div class="grip" style="left:545px;top:64px;width:7px;height:2px;background:linear-gradient(to right,#303030,#a0a0a0);box-shadow:0 1px 0 #fff"></div>
<div class="grip" style="left:545px;top:67px;width:7px;height:2px;background:linear-gradient(to right,#303030,#a0a0a0);box-shadow:0 1px 0 #fff"></div>
<div class="grip" style="left:545px;top:70px;width:7px;height:2px;background:linear-gradient(to right,#303030,#a0a0a0);box-shadow:0 1px 0 #fff"></div>
</div>
</body></html>
